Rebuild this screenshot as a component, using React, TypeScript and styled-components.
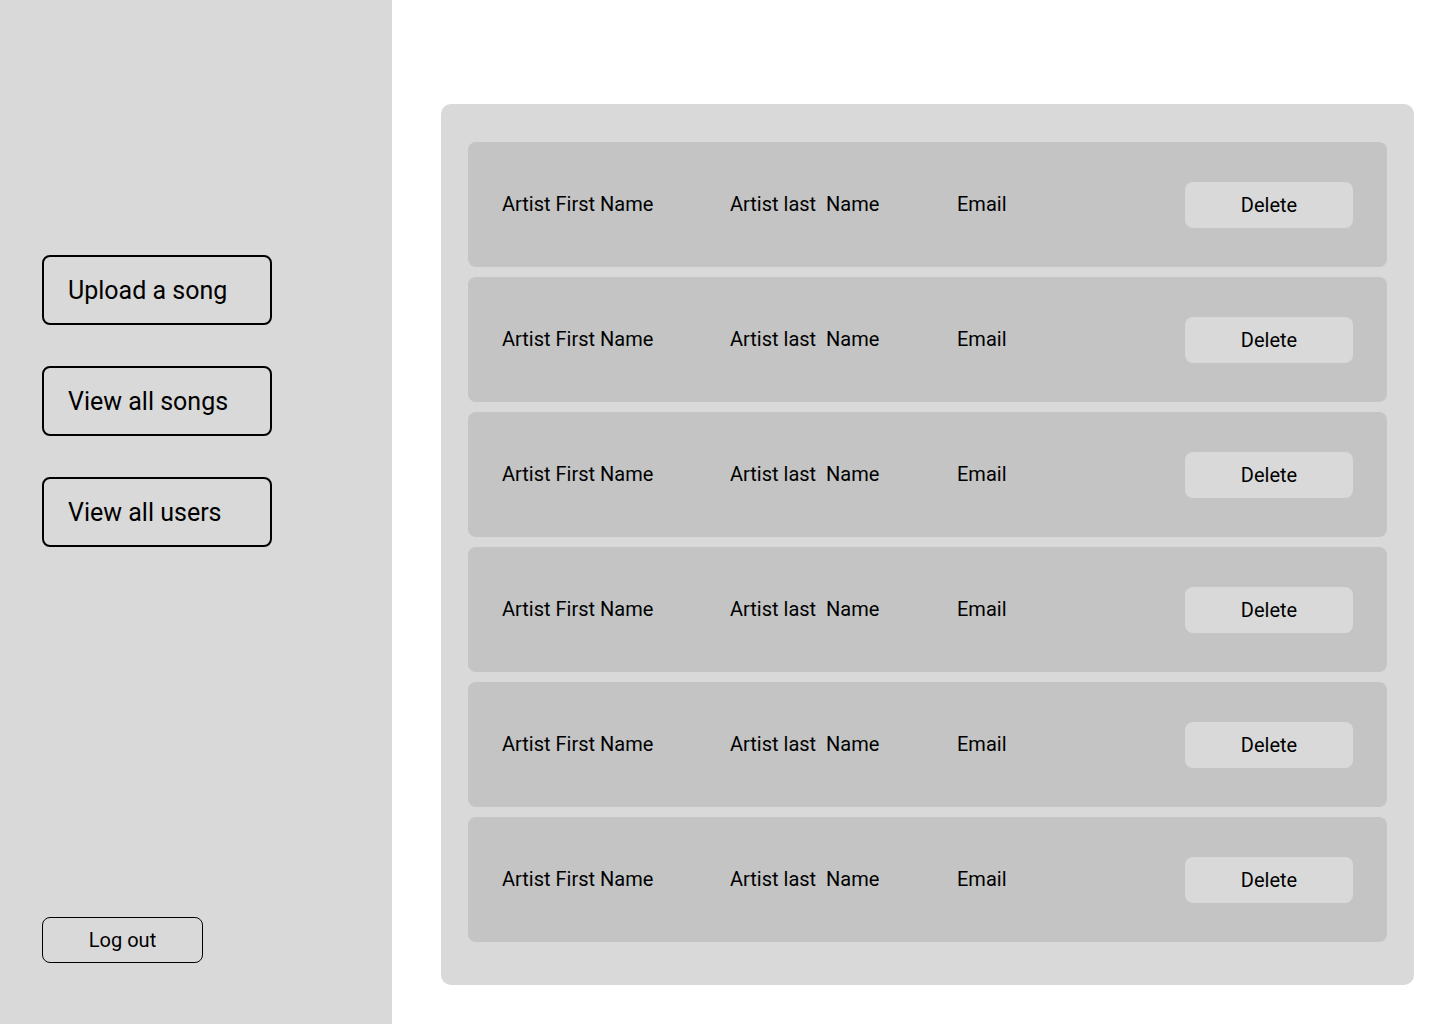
import React from "react";
import styled, { createGlobalStyle } from "styled-components";

const GlobalStyle = createGlobalStyle`
  html, body {
    margin: 0;
    padding: 0;
    background: #ffffff;
    font-family: Roboto, "Liberation Sans", sans-serif;
    color: #000;
  }
`;

const Page = styled.div`
  display: flex;
  width: 1440px;
  height: 1024px;
`;

const Sidebar = styled.aside`
  width: 392px;
  flex-shrink: 0;
  background: #d9d9d9;
  display: flex;
  flex-direction: column;
  padding: 255px 0 61px 42px;
  box-sizing: border-box;
`;

const NavList = styled.nav`
  display: flex;
  flex-direction: column;
  gap: 41px;
`;

const NavButton = styled.button`
  width: 230px;
  height: 70px;
  box-sizing: border-box;
  border: 2px solid #000;
  border-radius: 8px;
  background: transparent;
  font-family: Roboto, "Liberation Sans", sans-serif;
  font-size: 25px;
  text-align: left;
  padding: 0 0 0 24px;
  color: #000;
`;

const LogoutButton = styled.button`
  margin-top: auto;
  width: 161px;
  height: 46px;
  box-sizing: border-box;
  border: 1px solid #000;
  border-radius: 8px;
  background: transparent;
  font-family: Roboto, "Liberation Sans", sans-serif;
  font-size: 20px;
  color: #000;
`;

const Main = styled.main`
  flex: 1;
  padding: 104px 26px 39px 49px;
  box-sizing: border-box;
`;

const Panel = styled.section`
  background: #d9d9d9;
  border-radius: 10px;
  padding: 38px 27px 43px;
  display: flex;
  flex-direction: column;
  gap: 10px;
`;

const Row = styled.div`
  height: 125px;
  background: #c4c4c4;
  border-radius: 8px;
  display: flex;
  align-items: center;
  padding: 0 34px;
`;

const Cell = styled.span<{ $width: number }>`
  width: ${(p) => p.$width}px;
  font-size: 20px;
  white-space: pre;
  margin-top: -1px;
`;

const DeleteButton = styled.button`
  margin-left: auto;
  width: 168px;
  height: 46px;
  border: none;
  border-radius: 8px;
  background: #d9d9d9;
  font-family: Roboto, "Liberation Sans", sans-serif;
  font-size: 20px;
  color: #000;
`;

const navItems = ["Upload a song", "View all songs", "View all users"];
const rows = [1, 2, 3, 4, 5, 6];

export default function App() {
  return (
    <>
      <GlobalStyle />
      <Page>
        <Sidebar>
          <NavList>
            {navItems.map((item) => (
              <NavButton key={item}>{item}</NavButton>
            ))}
          </NavList>
          <LogoutButton>Log out</LogoutButton>
        </Sidebar>
        <Main>
          <Panel>
            {rows.map((r) => (
              <Row key={r}>
                <Cell $width={228}>Artist First Name</Cell>
                <Cell $width={227}>Artist last  Name</Cell>
                <Cell $width={120}>Email</Cell>
                <DeleteButton>Delete</DeleteButton>
              </Row>
            ))}
          </Panel>
        </Main>
      </Page>
    </>
  );
}
